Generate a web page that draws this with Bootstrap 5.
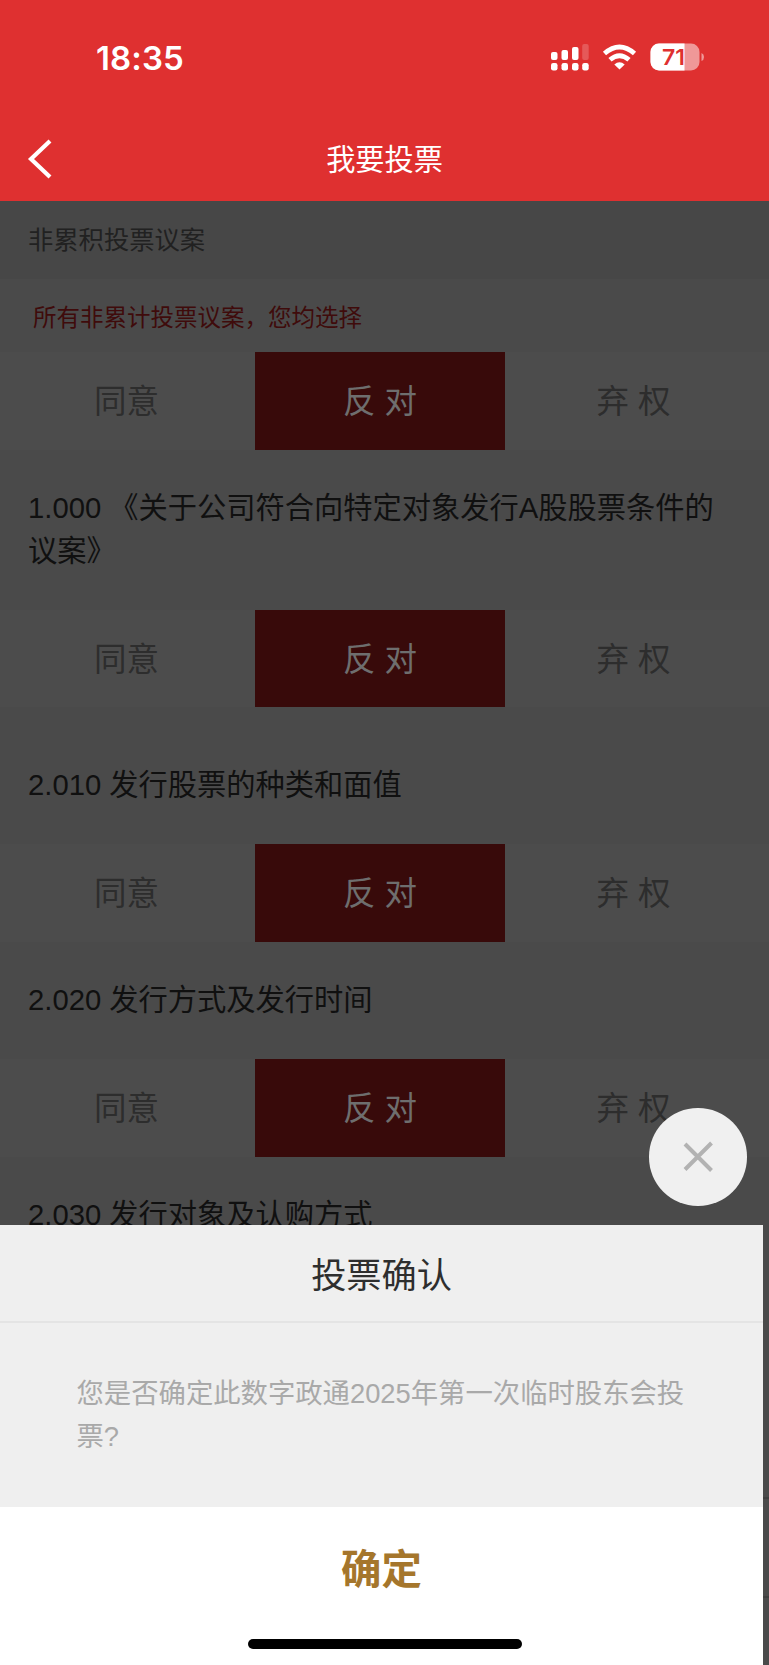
<!DOCTYPE html>
<html lang="zh-CN">
<head>
<meta charset="utf-8">
<meta name="viewport" content="width=device-width, initial-scale=1">
<title>我要投票</title>
<link href="https://cdn.jsdelivr.net/npm/bootstrap@5.3.0/dist/css/bootstrap.min.css" rel="stylesheet">
<style>
body{font-family:"Liberation Sans","Noto Sans CJK SC",sans-serif;background:#4a4a4a;height:1665px;overflow:hidden;line-height:1.5}
.app-head{height:201px;background:#df3030;color:#fff}
.status{height:115px;padding:0 64px 0 96px}
.clock{font:600 33px/40px Inter,sans-serif;letter-spacing:.1px}
.titlebar{height:86px;font-size:29.2px;padding-top:6px}
.sec-name{height:78px;background:#474747;color:#212121;font-size:25.3px;padding:2px 0 0 28px}
.note{height:73px;color:#3f0b0b;font-size:23.5px;padding:7px 0 0 33px}
.q{font-size:29.25px;line-height:43px;color:#101010;padding:0 27px 0 28px}
.q-long{height:160px}
.q-group{height:137px;padding-top:20px}
.q-item{height:117.5px}
.opts{height:97.5px;background:#4c4c4c;font-size:32.5px;color:#2d2d2d;padding-right:9px}
.opts>div{padding-top:4px}
.opts .on{background:#380a0a;color:#6e6e6e;width:250px}
.opts .side{width:255px}
.opts .side:first-child{padding-right:2px}
.opts .side:last-child{padding-left:2px}
.sheet{top:1225px;left:0;width:763px;height:440px;background:#fff}
.sheet-title{height:98px;background:#efefef;border-bottom:2px solid #e4e4e4;font-size:35.2px;color:#2e2e2e;padding-top:6px}
.sheet-text{height:183.5px;background:#efefef;color:#a9a9a9;font-size:27.35px;line-height:43px;padding:49px 70px 0 76.5px}
.confirm{height:127px;color:#a5762c;font-size:40.4px}
.home-bar{left:248px;top:1639px;width:274px;height:10px;background:#000}
.close-btn{left:649px;top:1108px;width:97.5px;height:97.5px;background:#f0f0f0}
.edge{top:1497px;right:0;width:6px;height:101px;border:solid #3f3f3f;border-width:2px 0}
</style>
</head>
<body class="position-relative">
<header class="app-head">
  <div class="status d-flex align-items-center justify-content-between">
    <span class="clock">18:35</span>
    <svg width="156" height="30" viewBox="0 0 156 30" fill="#fff">
      <g><rect x="2" y="9" width="6.5" height="8" rx="2"/><rect x="12.5" y="7" width="6.5" height="10" rx="2"/><rect x="23" y="4" width="6.5" height="13" rx="2"/><rect x="33.2" y="1" width="6.5" height="16" rx="2" opacity=".2"/>
      <rect x="2" y="20" width="6.5" height="7.5" rx="2.2"/><rect x="12.5" y="20" width="6.5" height="7.5" rx="2.2"/><rect x="23" y="20" width="6.5" height="7.5" rx="2.2"/><rect x="33.2" y="20" width="6.5" height="7.5" rx="2.2"/></g>
      <g fill="none" stroke="#fff" stroke-width="4.8"><path d="M55.500 10.500Q70.500 -2.500 85.500 10.500"/><path d="M61 16.800Q70.500 8.500 80 16.800"/></g>
      <path d="M65.300 21.500Q70.500 17 75.700 21.500L70.500 26.500Z"/>
      <defs><clipPath id="cell"><rect x="101.500" y="0.500" width="49" height="27" rx="8.500"/></clipPath></defs>
      <g clip-path="url(#cell)"><rect x="101" y="0" width="50" height="28" opacity=".5"/><rect x="101" y="0" width="34.500" height="28"/></g>
      <path d="M152.500 10Q155 11 155 14T152.500 18Z" opacity=".5"/>
      <text x="113" y="22" fill="#df3030" font-family="Inter,sans-serif" font-weight="600" font-size="22" textLength="23" lengthAdjust="spacingAndGlyphs">71</text>
    </svg>
  </div>
  <div class="titlebar position-relative d-flex align-items-center justify-content-center">
    <svg class="position-absolute start-0 top-0" width="70" height="86" viewBox="0 0 70 86" fill="none" stroke="#fff" stroke-width="4.200"><path d="M50 26L31 44L50 62"/></svg>
    <span>我要投票</span>
  </div>
</header>
<main>
  <div class="sec-name d-flex align-items-center">非累积投票议案</div>
  <div class="note d-flex align-items-center">所有非累计投票议案，您均选择</div>
  <div class="opts d-flex"><div class="side d-flex align-items-center justify-content-center">同意</div><div class="on d-flex align-items-center justify-content-center">反 对</div><div class="side d-flex align-items-center justify-content-center">弃 权</div></div>
  <div class="q q-long d-flex align-items-center">1.000 《关于公司符合向特定对象发行A股股票条件的议案》</div>
  <div class="opts d-flex"><div class="side d-flex align-items-center justify-content-center">同意</div><div class="on d-flex align-items-center justify-content-center">反 对</div><div class="side d-flex align-items-center justify-content-center">弃 权</div></div>
  <div class="q q-group d-flex align-items-center">2.010 发行股票的种类和面值</div>
  <div class="opts d-flex"><div class="side d-flex align-items-center justify-content-center">同意</div><div class="on d-flex align-items-center justify-content-center">反 对</div><div class="side d-flex align-items-center justify-content-center">弃 权</div></div>
  <div class="q q-item d-flex align-items-center">2.020 发行方式及发行时间</div>
  <div class="opts d-flex"><div class="side d-flex align-items-center justify-content-center">同意</div><div class="on d-flex align-items-center justify-content-center">反 对</div><div class="side d-flex align-items-center justify-content-center">弃 权</div></div>
  <div class="q q-item d-flex align-items-center">2.030 发行对象及认购方式</div>
</main>
<div class="edge position-absolute"></div>
<button class="close-btn position-absolute rounded-circle border-0 p-0 d-flex align-items-center justify-content-center" aria-label="关闭">
  <svg width="32" height="32" viewBox="0 0 32 32" stroke="#b2b2b2" stroke-width="4"><path d="M3 3L29.500 29.500M29.500 2L3 28.500"/></svg>
</button>
<section class="sheet position-absolute">
  <div class="sheet-title d-flex align-items-center justify-content-center">投票确认</div>
  <div class="sheet-text">您是否确定此数字政通2025年第一次临时股东会投票?</div>
  <div class="confirm fw-bold d-flex align-items-center justify-content-center">确定</div>
</section>
<div class="home-bar position-absolute rounded-pill"></div>
<script src="https://cdn.jsdelivr.net/npm/bootstrap@5.3.0/dist/js/bootstrap.bundle.min.js"></script>
</body>
</html>
